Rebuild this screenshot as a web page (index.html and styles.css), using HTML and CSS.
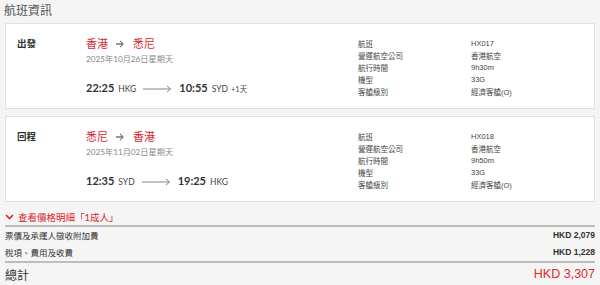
FILE: index.html
```html
<!DOCTYPE html>
<html lang="zh-Hant">
<head>
    <meta charset="UTF-8">
    <link rel="stylesheet" href="styles.css">
</head>
<body>
    <div class="title">航班資訊</div>

    <div class="card">
        <div class="card-label">出發</div>
        <div class="flight">
            <div class="route">香港
                <svg class="route-arrow" width="9" height="8" viewBox="0 0 9 8"><path d="M0 3.3h5.6L3.6 1.3l.8-.8L7.9 4 4.4 7.5l-.8-.8 2-2H0z" fill="#777"/></svg>
                悉尼</div>
            <div class="date">2025年10月26日星期天</div>
            <div class="times">
                <span class="time">22:25</span><span class="code">HKG</span>
                <svg class="long-arrow" width="29" height="8" viewBox="0 0 29 8"><path d="M0 4h27.5M24 1l3.5 3-3.5 3" fill="none" stroke="#777" stroke-width="0.9"/></svg>
                <span class="time">10:55</span><span class="code">SYD</span><span class="plus">+1天</span>
            </div>
        </div>
        <div class="info">
            <span>航班</span><span>HX017</span>
            <span>營運航空公司</span><span>香港航空</span>
            <span>航行時間</span><span>9h30m</span>
            <span>機型</span><span>33G</span>
            <span>客艙級別</span><span>經濟客艙(O)</span>
        </div>
    </div>

    <div class="card">
        <div class="card-label">回程</div>
        <div class="flight">
            <div class="route">悉尼
                <svg class="route-arrow" width="9" height="8" viewBox="0 0 9 8"><path d="M0 3.3h5.6L3.6 1.3l.8-.8L7.9 4 4.4 7.5l-.8-.8 2-2H0z" fill="#777"/></svg>
                香港</div>
            <div class="date">2025年11月02日星期天</div>
            <div class="times">
                <span class="time">12:35</span><span class="code">SYD</span>
                <svg class="long-arrow" width="29" height="8" viewBox="0 0 29 8"><path d="M0 4h27.5M24 1l3.5 3-3.5 3" fill="none" stroke="#777" stroke-width="0.9"/></svg>
                <span class="time">19:25</span><span class="code">HKG</span>
            </div>
        </div>
        <div class="info">
            <span>航班</span><span>HX018</span>
            <span>營運航空公司</span><span>香港航空</span>
            <span>航行時間</span><span>9h50m</span>
            <span>機型</span><span>33G</span>
            <span>客艙級別</span><span>經濟客艙(O)</span>
        </div>
    </div>

    <div class="toggle">
        <svg width="9" height="6" viewBox="0 0 9 6"><path d="M1 1l3.5 3.5L8 1" fill="none" stroke="#d9262c" stroke-width="1.6"/></svg>
        查看價格明細「1成人」
    </div>

    <div class="price-rows">
        <div class="price-row"><span>票價及承運人徵收附加費</span><span class="amount">HKD 2,079</span></div>
        <div class="price-row"><span>稅項、費用及收費</span><span class="amount">HKD 1,228</span></div>
    </div>

    <div class="total">
        <span>總計</span><span class="total-amount">HKD 3,307</span>
    </div>
</body>
</html>
```

FILE: styles.css
```css
body {
    margin: 0;
    padding: 0 5px 0 5px;
    background: #f5f5f5;
    font-family: Lato, "Noto Sans CJK TC", sans-serif;
    color: #333;
}
.title {
    height: 23px;
    line-height: 22px;
    font-size: 12px;
    color: #555;
    margin-left: -1px;
}
.card {
    display: flex;
    box-sizing: border-box;
    height: 86px;
    margin-bottom: 7px;
    padding-top: 13px;
    background: #fff;
    border: 1px solid #e0e0e0;
}
.card-label {
    width: 69px;
    padding-left: 11px;
    font-size: 9.5px;
    line-height: 14px;
    font-weight: bold;
    color: #333;
}
.flight { width: 272px; }
.route {
    display: flex;
    align-items: center;
    gap: 8px;
    font-size: 11px;
    line-height: 14px;
    color: #d9262c;
}
.date {
    margin-top: 2px;
    font-size: 8.2px;
    line-height: 12px;
    color: #888;
}
.times {
    display: flex;
    align-items: baseline;
    margin-top: 15px;
    line-height: 16px;
}
.time {
    font-size: 11px;
    font-weight: bold;
    color: #333;
}
.code {
    margin-left: 4px;
    font-size: 8.5px;
    color: #444;
}
.plus {
    margin-left: 3px;
    font-size: 7.5px;
    color: #444;
}
.long-arrow {
    margin: 0 7px;
    align-self: center;
}
.info {
    display: grid;
    grid-template-columns: 113px auto;
    grid-auto-rows: 12px;
    align-items: center;
    font-family: "Liberation Sans", "Noto Sans CJK TC", sans-serif;
    font-size: 7.5px;
    color: #444;
}
.toggle {
    display: flex;
    align-items: center;
    gap: 4px;
    margin-top: 8px;
    height: 14px;
    font-size: 9.5px;
    color: #d9262c;
    padding-bottom: 1px;
    border-bottom: 2px solid #bdbdbd;
}
.price-row {
    display: flex;
    justify-content: space-between;
    align-items: center;
    height: 16px;
    font-size: 8.5px;
    color: #333;
}
.price-row + .price-row { height: 18px; }
.price-rows { border-bottom: 2px solid #bdbdbd; }
.amount {
    font-family: "Liberation Sans", sans-serif;
    font-weight: bold;
}
.total {
    display: flex;
    justify-content: space-between;
    align-items: center;
    height: 22px;
    font-size: 12px;
    color: #333;
}
.total-amount {
    font-family: "Liberation Sans", sans-serif;
    font-size: 12.5px;
    color: #e3262f;
}
```
